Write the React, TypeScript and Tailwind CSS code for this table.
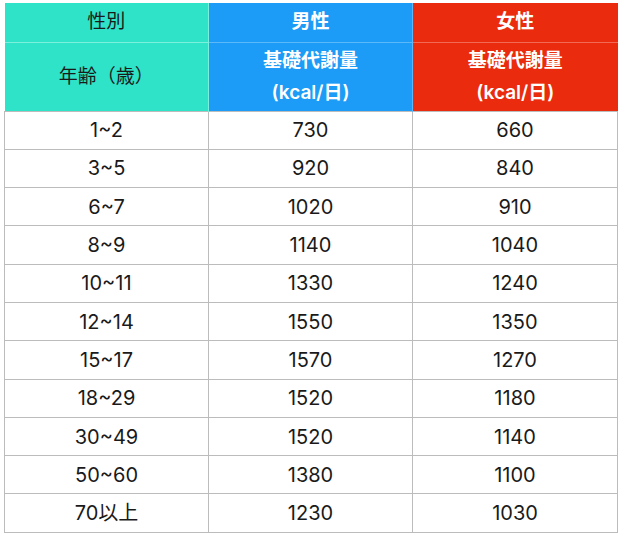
import React from 'react';

const rows: [string, string, string][] = [
  ['1~2', '730', '660'],
  ['3~5', '920', '840'],
  ['6~7', '1020', '910'],
  ['8~9', '1140', '1040'],
  ['10~11', '1330', '1240'],
  ['12~14', '1550', '1350'],
  ['15~17', '1570', '1270'],
  ['18~29', '1520', '1180'],
  ['30~49', '1520', '1140'],
  ['50~60', '1380', '1100'],
  ['70以上', '1230', '1030'],
];

const font = { fontFamily: 'Inter, "Noto Sans CJK JP", "Noto Sans", sans-serif' };

export default function App() {
  return (
    <div className="w-[620px] h-[535px] bg-white pl-[4px] pt-[3px]" style={font}>
      <table className="border-collapse w-[613px] table-fixed">
        <colgroup>
          <col className="w-[204px]" />
          <col className="w-[204px]" />
          <col className="w-[205px]" />
        </colgroup>
        <thead>
          <tr className="h-[39px] text-[19px]">
            <th className="bg-[#2ee3c7] font-normal text-[#1a1a1a] border-r border-b border-[#7df0dd]">性別</th>
            <th className="bg-[#1c9cf6] font-semibold text-white border-r border-b border-[#5cb8f8]">男性</th>
            <th className="bg-[#ea2b0d] font-semibold text-white border-b border-[#f06a55]">女性</th>
          </tr>
          <tr className="h-[69px] text-[19px] leading-[32px]">
            <th className="bg-[#2ee3c7] font-normal text-[#1a1a1a] border-r border-[#7df0dd]">年齢（歳）</th>
            <th className="bg-[#1c9cf6] font-semibold text-white border-r border-[#5cb8f8]">
              <div>基礎代謝量</div>
              <div>(kcal/日)</div>
            </th>
            <th className="bg-[#ea2b0d] font-semibold text-white">
              <div>基礎代謝量</div>
              <div>(kcal/日)</div>
            </th>
          </tr>
        </thead>
        <tbody>
          {rows.map(([age, m, f]) => (
            <tr key={age} className="h-[38.3px] text-[20px] text-[#1a1a1a]">
              <td className="text-center border border-[#bcbcbc]">{age}</td>
              <td className="text-center border border-[#bcbcbc]">{m}</td>
              <td className="text-center border border-[#bcbcbc]">{f}</td>
            </tr>
          ))}
        </tbody>
      </table>
    </div>
  );
}
